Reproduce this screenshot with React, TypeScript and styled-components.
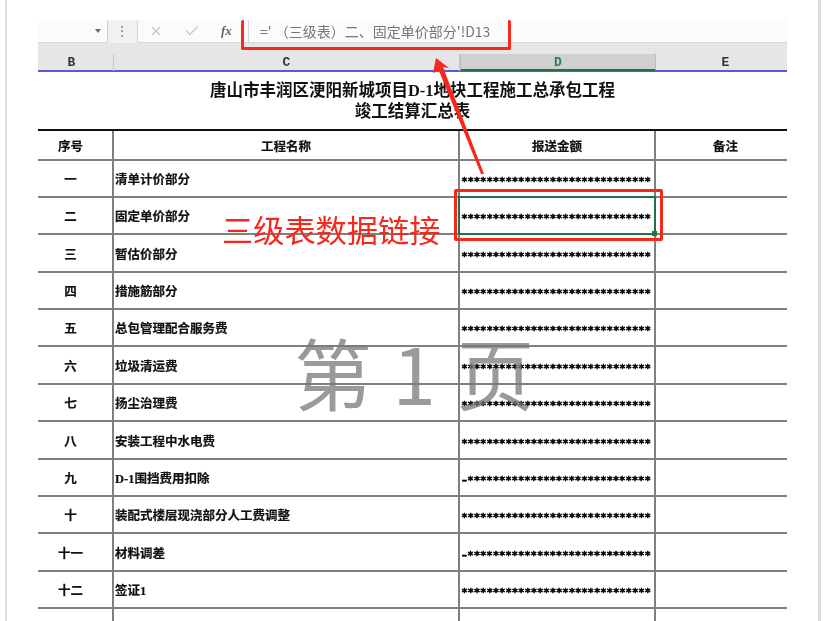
import React from "react";
import styled, { createGlobalStyle } from "styled-components";
import { X, Check } from "lucide-react";

const Global = createGlobalStyle`
  html, body { margin: 0; padding: 0; background: #fff; }
  body { font-family: "Noto Sans CJK SC", "Liberation Sans", sans-serif; overflow: hidden; }
  * { box-sizing: border-box; }
`;

const CJK = `"Liberation Serif", "Noto Sans CJK SC", serif`;

const Page = styled.div`
  position: relative;
  width: 826px;
  height: 621px;
  overflow: hidden;
  background: #fff;
  padding: 0 5px 0 5px;
  filter: blur(0.4px);
`;

const Frame = styled.div`
  height: 100%;
  border-left: 2px solid #dcdcdc;
  border-right: 3px solid #dcdcdc;
  padding: 20px 31px 0;
  display: flex;
  flex-direction: column;
`;

const Toolbar = styled.div`
  height: 23px;
  flex: none;
  display: flex;
  align-items: stretch;
  background: #fbfbfb;
`;

const NameBox = styled.div`
  width: 70px;
  display: flex;
  align-items: center;
  justify-content: flex-end;
  padding-right: 6px;
  border-right: 1px solid #cfcfcf;
  border-bottom: 1px solid #d8d8d8;
`;

const Caret = styled.span`
  width: 0;
  height: 0;
  border-left: 3.5px solid transparent;
  border-right: 3.5px solid transparent;
  border-top: 4px solid #6a6a6a;
`;

const Splitter = styled.div`
  width: 30px;
  display: flex;
  align-items: center;
  justify-content: center;
  padding-right: 2px;
  background: #f1f1f1;
  border-right: 1px solid #d6d6d6;
`;

const Dots = styled.span`
  width: 2px;
  height: 11px;
  background: repeating-linear-gradient(#a0a0a0 0 2px, transparent 2px 4.5px);
`;

const Actions = styled.div`
  width: 110px;
  display: flex;
  align-items: center;
  border-bottom: 1px solid #d8d8d8;
  padding-left: 10px;
  gap: 20px;
`;

const Fx = styled.span`
  font: italic 700 13px "Liberation Serif", serif;
  color: #666;
  margin-left: 1px;
`;

const Formula = styled.div`
  flex: 1;
  display: flex;
  align-items: center;
  padding-left: 11px;
  font-size: 14px;
  color: #767676;
  white-space: nowrap;
  border-left: 1px solid #d8d8d8;
  border-bottom: 1px solid #d8d8d8;
`;

const Headers = styled.div`
  height: 29px;
  flex: none;
  display: grid;
  grid-template-columns: 76px 346px 196px 131px;
  align-items: end;
  background: #e6e6e6;
  border-bottom: 2px solid #5a5ad2;
`;

const HeaderCell = styled.div<{ $active?: boolean; $pad?: "left" | "right" }>`
  height: 17px;
  margin-bottom: -1px;
  text-align: center;
  padding-left: ${(p) => (p.$pad === "left" ? "8px" : "0")};
  padding-right: ${(p) => (p.$pad === "right" ? "8px" : "0")};
  font: 700 13px/17px "Liberation Mono", monospace;
  color: ${(p) => (p.$active ? "#2f7d55" : "#333")};
  background: ${(p) => (p.$active ? "#d0d0d0" : "transparent")};
  border-right: 1px solid ${(p) => (p.$active ? "#bdbdbd" : "#c6c6c6")};
  border-left: ${(p) => (p.$active ? "1px solid #bdbdbd" : "0")};
  border-bottom: ${(p) => (p.$active ? "2px solid #217346" : "0")};
  &:last-child { border-right: 0; }
`;

const Title = styled.div`
  height: 57px;
  flex: none;
  padding-top: 8px;
  text-align: center;
  font: 700 16.5px/21px ${CJK};
  color: #111;
  white-space: nowrap;
`;

const Table = styled.div`
  flex: 1;
  display: flex;
  flex-direction: column;
  border-top: 2px solid #111;
`;

const Row = styled.div<{ $h?: number }>`
  display: grid;
  grid-template-columns: 76px 346px 196px 131px;
  height: ${(p) => (p.$h ? `${p.$h}px` : "auto")};
  flex: ${(p) => (p.$h ? "none" : "1")};
  border-bottom: ${(p) => (p.$h ? "2px solid #808080" : "0")};
`;

const Cell = styled.div<{ $align?: "left" | "center"; $selected?: boolean; $pad?: "left" | "right" }>`
  position: relative;
  display: flex;
  align-items: center;
  justify-content: ${(p) => (p.$align === "left" ? "flex-start" : "center")};
  padding-top: 4px;
  padding-left: ${(p) => (p.$align === "left" ? "1px" : p.$pad === "left" ? "8px" : "0")};
  padding-right: ${(p) => (p.$pad === "right" ? "9px" : "0")};
  font: 700 12.5px/1 ${CJK};
  color: #111;
  white-space: nowrap;
  border-right: 2px solid #808080;
  -webkit-text-stroke: 0.2px #111;
  &:last-child { border-right: 0; }
  ${(p) =>
    p.$selected
      ? `&::after {
          content: "";
          position: absolute;
          left: -2px; right: -2px; top: -2px; bottom: -2px;
          border: 2px solid #217346;
        }
        &::before {
          content: "";
          position: absolute;
          right: -3px; bottom: -3px;
          width: 5px; height: 5px;
          background: #217346;
          z-index: 1;
        }`
      : ""}
`;

const Amount = styled.span`
  font: 700 10.4px/1 "DejaVu Sans", sans-serif;
  letter-spacing: 0.89px;
  color: #000;
  margin-left: -1px;
  padding-top: 2px;
  -webkit-text-stroke: 0.55px #000;
`;

const RedBox = styled.div<{ $variant: "formula" | "cell" }>`
  position: absolute;
  border: 3px solid #f5281e;
  border-radius: 2px;
  ${(p) =>
    p.$variant === "formula"
      ? `left: 241px; top: 20px; width: 270px; height: 30px; border-top: 0;`
      : `left: 454px; top: 189px; width: 209px; height: 52px;`}
`;

const Arrow = styled.svg`
  position: absolute;
  left: 425px;
  top: 50px;
  width: 70px;
  height: 130px;
`;

const Callout = styled.div`
  position: absolute;
  left: 222px;
  top: 206px;
  font-size: 31.2px;
  line-height: 46px;
  color: #f5281e;
  white-space: nowrap;
`;

const Watermark = styled.div`
  position: absolute;
  left: 294px;
  top: 321px;
  font-size: 78px;
  line-height: 100px;
  font-weight: 400;
  word-spacing: 3px;
  color: rgba(120, 120, 120, 0.75);
  white-space: nowrap;
`;

const stars = "*".repeat(30);
const neg = "–" + "*".repeat(29);

const rows: [string, string, string, number][] = [
  ["一", "清单计价部分", stars, 37],
  ["二", "固定单价部分", stars, 37],
  ["三", "暂估价部分", stars, 38],
  ["四", "措施筋部分", stars, 37],
  ["五", "总包管理配合服务费", stars, 37],
  ["六", "垃圾清运费", stars, 38],
  ["七", "扬尘治理费", stars, 37],
  ["八", "安装工程中水电费", stars, 38],
  ["九", "D-1围挡费用扣除", neg, 37],
  ["十", "装配式楼层现浇部分人工费调整", stars, 37],
  ["十一", "材料调差", neg, 38],
  ["十二", "签证1", stars, 37],
];

export default function App() {
  return (
    <Page>
      <Global />
      <Frame>
        <Toolbar>
          <NameBox><Caret /></NameBox>
          <Splitter><Dots /></Splitter>
          <Actions>
            <X size={16} color="#c4c4c4" strokeWidth={1.6} />
            <Check size={16} color="#c4c4c4" strokeWidth={1.8} />
            <Fx>fx</Fx>
          </Actions>
          <Formula>=' （三级表）二、固定单价部分'!D13</Formula>
        </Toolbar>
        <Headers>
          <HeaderCell $pad="right">B</HeaderCell>
          <HeaderCell>C</HeaderCell>
          <HeaderCell $active>D</HeaderCell>
          <HeaderCell $pad="left">E</HeaderCell>
        </Headers>
        <Title>
          唐山市丰润区浭阳新城项目D-1地块工程施工总承包工程
          <br />
          竣工结算汇总表
        </Title>
        <Table>
          <Row $h={30}>
            <Cell $pad="right">序号</Cell>
            <Cell>工程名称</Cell>
            <Cell>报送金额</Cell>
            <Cell $pad="left">备注</Cell>
          </Row>
          {rows.map(([no, name, amount, h], i) => (
            <Row key={no} $h={h}>
              <Cell $pad="right">{no}</Cell>
              <Cell $align="left">{name}</Cell>
              <Cell $selected={i === 1}><Amount>{amount}</Amount></Cell>
              <Cell />
            </Row>
          ))}
          <Row>
            <Cell />
            <Cell />
            <Cell />
            <Cell />
          </Row>
        </Table>
      </Frame>
      <Watermark>第 1 页</Watermark>
      <RedBox $variant="formula" />
      <RedBox $variant="cell" />
      <Arrow viewBox="425 50 70 130">
        <polygon points="436,58 449,68 443,67 484,174 481,174 439,71 433,73" fill="#f5281e" />
      </Arrow>
      <Callout>三级表数据链接</Callout>
    </Page>
  );
}
